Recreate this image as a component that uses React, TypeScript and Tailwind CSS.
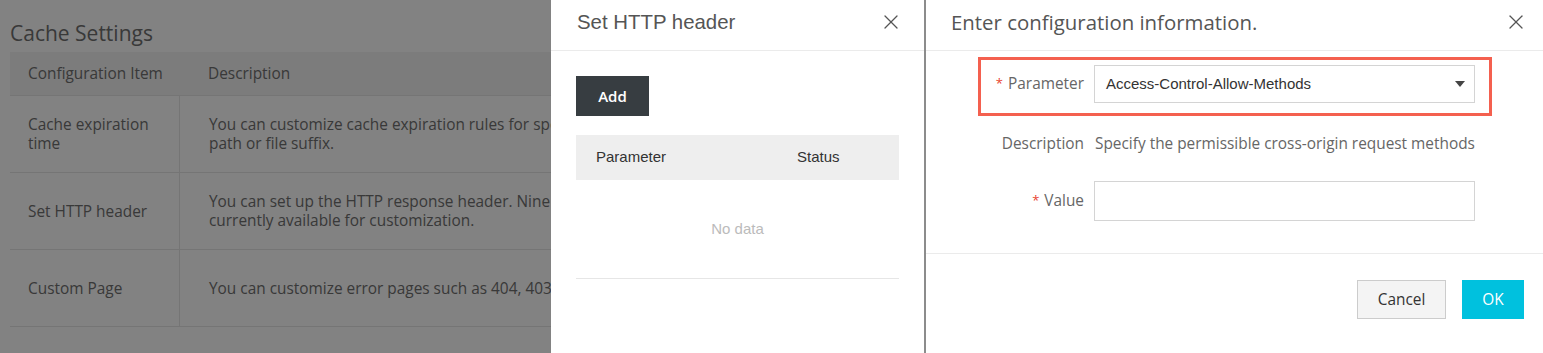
import { X } from 'lucide-react';

const segoe = "font-['Open_Sans','Noto_Sans',sans-serif]";
const arial = "font-['Liberation_Sans',Arial,sans-serif]";

const cacheRows = [
  {
    item: 'Cache expiration time',
    lines: ['You can customize cache expiration rules for specified directory', 'path or file suffix.']
  },
  {
    item: 'Set HTTP header',
    lines: ['You can set up the HTTP response header. Nine HTTP headers are', 'currently available for customization.']
  },
  {
    item: 'Custom Page',
    lines: ['You can customize error pages such as 404, 403, 503 and 504.']
  }
];

function CloseIcon() {
  return <X className="h-[24px] w-[24px] text-[#555]" strokeWidth={1.3} />;
}

function Required() {
  return <span className="mr-[5px] text-[13px] text-[#e8432f]">*</span>;
}

function CachePage() {
  return (
    <div className={`${segoe} px-[10px] pt-[19px] text-[#707070]`}>
      <h2 className="text-[21px] leading-[28px]">Cache Settings</h2>
      <div className="mt-[5px] w-[1000px] text-[15.4px]">
        <div className="grid h-[44px] grid-cols-[169px_1fr] items-center border-b border-[#e6e6e6] bg-[#f3f3f3]">
          <div className="pl-[18px]">Configuration Item</div>
          <div className="pl-[29px]">Description</div>
        </div>
        {cacheRows.map((row) => (
          <div
            key={row.item}
            className="grid h-[77px] grid-cols-[169px_1fr] border-b border-[#e6e6e6] leading-[19px]"
          >
            <div className="flex items-center pl-[18px] pr-[16px]">{row.item}</div>
            <div className="flex flex-col justify-center border-l border-[#e6e6e6] pl-[29px] whitespace-nowrap">
              {row.lines.map((line) => (
                <span key={line}>{line}</span>
              ))}
            </div>
          </div>
        ))}
      </div>
    </div>
  );
}

function HeaderDrawer() {
  return (
    <div className="h-full w-[373px] bg-white">
      <div className="flex h-[51px] items-center justify-between border-b border-[#ebebeb] pl-[26px] pr-[21px]">
        <span className={`${arial} pb-[6px] text-[20.4px] text-[#555]`}>Set HTTP header</span>
        <span className="pb-[6px]">
          <CloseIcon />
        </span>
      </div>
      <div className="px-[25px] pt-[25px]">
        <button
          className={`${segoe} h-[40px] w-[73px] bg-[#373d41] text-[15px] font-semibold text-white`}
          type="button"
        >
          Add
        </button>
        <div className={`${arial} mt-[19px] text-[15px]`}>
          <div className="flex h-[45px] items-center bg-[#eeeeee] text-[#333]">
            <span className="w-[221px] pl-[20px]">Parameter</span>
            <span>Status</span>
          </div>
          <div className="flex h-[99px] items-center justify-center border-b border-[#e6e6e6] text-[#bbbbbb]">
            No data
          </div>
        </div>
      </div>
    </div>
  );
}

function ConfigDrawer() {
  return (
    <div className={`${segoe} h-full w-[619px] border-l-2 border-[#8c8c8c] bg-white text-[15.4px] text-[#666]`}>
      <div className="flex h-[51px] items-center justify-between border-b border-[#ebebeb] pl-[25px] pr-[15px]">
        <span className="pb-[6px] text-[20.4px] text-[#555]">Enter configuration information.</span>
        <span className="pb-[6px]">
          <CloseIcon />
        </span>
      </div>
      <div className="h-[203px] border-b border-[#ebebeb] pt-[6px]">
        <div className="ml-[52px] h-[59px] w-[514px] border-[3px] border-[#f4604f] pt-[5px]">
          <div className="flex items-center">
            <label className="flex w-[103px] items-center justify-end">
              <Required />
              Parameter
            </label>
            <div className="ml-[10px] flex h-[38px] w-[381px] items-center justify-between border border-[#d4d4d4] pl-[11px] pr-[9px]">
              <span className={`${arial} text-[15px] text-[#333]`}>Access-Control-Allow-Methods</span>
              <svg width="10" height="6" viewBox="0 0 10 6">
                <path d="M0 0 H10 L5 6 Z" fill="#444" />
              </svg>
            </div>
          </div>
        </div>
        <div className="mt-[16px] flex h-[24px] items-center">
          <span className="w-[158px] text-right">Description</span>
          <span className="ml-[11px]">Specify the permissible cross-origin request methods</span>
        </div>
        <div className="mt-[25px] flex items-center">
          <label className="flex w-[158px] items-center justify-end">
            <Required />
            Value
          </label>
          <input className="ml-[10px] h-[40px] w-[381px] border border-[#d4d4d4] outline-none" type="text" />
        </div>
      </div>
      <div className="flex justify-end gap-[16px] pr-[19px] pt-[26px]">
        <button className="h-[39px] w-[89px] border border-[#cccccc] bg-[#f4f4f4] text-[15.4px] text-[#333]" type="button">
          Cancel
        </button>
        <button className="h-[39px] w-[62px] bg-[#00c1de] text-[15.4px] text-white" type="button">
          OK
        </button>
      </div>
    </div>
  );
}

export default function App() {
  return (
    <div className="relative h-[353px] w-[1543px] overflow-hidden bg-white">
      <CachePage />
      <div className="absolute inset-0 bg-black/[0.49]" />
      <div className="absolute right-0 top-0 flex h-full">
        <HeaderDrawer />
        <ConfigDrawer />
      </div>
    </div>
  );
}
